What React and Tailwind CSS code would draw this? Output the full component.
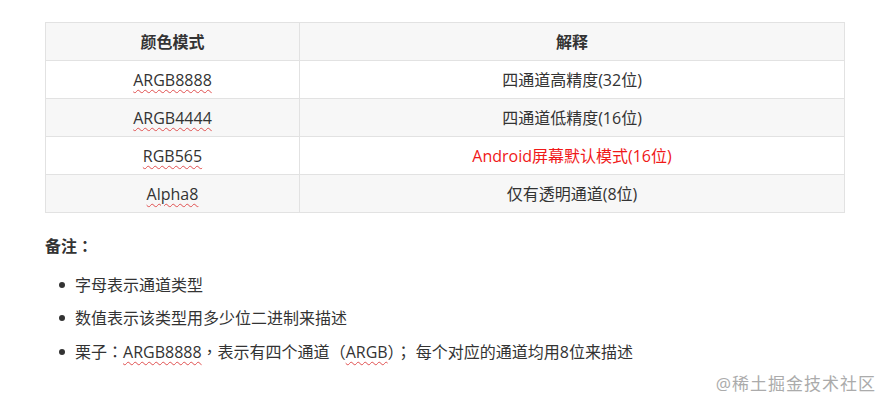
import React from 'react';

const rows = [
  { mode: 'ARGB8888', desc: '四通道高精度(32位)' },
  { mode: 'ARGB4444', desc: '四通道低精度(16位)' },
  { mode: 'RGB565', desc: 'Android屏幕默认模式(16位)', red: true },
  { mode: 'Alpha8', desc: '仅有透明通道(8位)' },
];

const squiggle = 'underline decoration-wavy decoration-[#e05050] decoration-1 underline-offset-[3px]';

// full-width punctuation drawn centred, like the original page font
const P = ({ children }) => (
  <span style={{ fontFamily: '"Noto Sans CJK TC", sans-serif' }}>{children}</span>
);

const Bullet = () => <span className="w-[6px] h-[6px] rounded-full bg-[#333] mr-[10px] shrink-0"></span>;

const App = () => {
  return (
    <div
      className="w-[890px] h-[404px] bg-white text-[#333] text-[16px] overflow-hidden"
      style={{ fontFamily: '"Open Sans", "Noto Sans CJK SC", sans-serif' }}
    >
      <div className="pl-[45px] pt-[22px]">
        {/* Colour mode table */}
        <table className="border-collapse w-[800px] text-center">
          <thead>
            <tr className="bg-[#f7f7f7]">
              <th className="w-[254px] h-[38px] border border-[#e2e2e2] font-bold">颜色模式</th>
              <th className="h-[38px] border border-[#e2e2e2] font-bold">解释</th>
            </tr>
          </thead>
          <tbody>
            {rows.map((r, i) => (
              <tr key={r.mode} className={i % 2 === 1 ? 'bg-[#f7f7f7]' : 'bg-white'}>
                <td className="h-[38px] border border-[#e2e2e2]">
                  <span className={squiggle}>{r.mode}</span>
                </td>
                <td className={`h-[38px] border border-[#e2e2e2] ${r.red ? 'text-[#f01818]' : ''}`}>
                  {r.desc}
                </td>
              </tr>
            ))}
          </tbody>
        </table>

        {/* Notes */}
        <p className="mt-[20px] font-bold leading-[24px]">备注<P>：</P></p>
        <ul className="mt-[15px] ml-[14px] space-y-[9px]">
          <li className="flex items-center leading-[24px]">
            <Bullet />
            字母表示通道类型
          </li>
          <li className="flex items-center leading-[24px]">
            <Bullet />
            数值表示该类型用多少位二进制来描述
          </li>
          <li className="flex items-center leading-[24px]">
            <Bullet />
            <span className="whitespace-nowrap">
              栗子<P>：</P><span className={squiggle}>ARGB8888</span><P>，</P>表示有四个通道<P>（</P><span className={squiggle}>ARGB</span><P>）；</P> 每个对应的通道均用8位来描述
            </span>
          </li>
        </ul>
      </div>

      {/* Watermark */}
      <div className="flex justify-end pr-[14px] mt-[7px]">
        <span className="text-[#ababab] text-[17px] tracking-[1px]">@稀土掘金技术社区</span>
      </div>
    </div>
  );
};

export default App;
